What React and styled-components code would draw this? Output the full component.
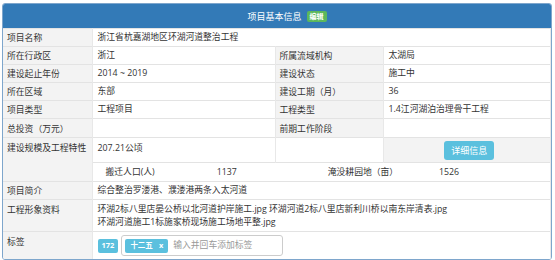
import React from 'react'
import styled, { createGlobalStyle } from 'styled-components'

const Global = createGlobalStyle`
  body {
    margin: 0;
    background: #fff;
    font-family: "Open Sans", "Noto Sans CJK SC", sans-serif;
    font-size: 8.8px;
    color: #333;
  }
`

const Panel = styled.div`
  margin: 3px 3px 0 2px;
  border: 1px solid #7ea6cc;
  border-radius: 3px;
  overflow: hidden;
`

const Heading = styled.div`
  height: 24px;
  background: #337ab7;
  color: #fff;
  display: flex;
  align-items: center;
  justify-content: center;
  gap: 5px;
  font-size: 9px;
  padding-left: 20px;
`

const Badge = styled.span`
  background: ${p => p.$color || '#5cb85c'};
  color: #fff;
  font-size: ${p => p.$size || '7px'};
  font-weight: 700;
  line-height: 1;
  padding: ${p => p.$pad || '2px 3px'};
  border-radius: 2px;
  display: inline-flex;
  align-items: center;
  gap: 6px;
`

const Table = styled.table`
  width: 100%;
  border-collapse: collapse;
  table-layout: fixed;
`

const Row = styled.tr`
  height: ${p => p.$h || 18}px;
  border-top: 1px solid #e3e3e3;
`

const Label = styled.td`
  background: #f3f3f3;
  padding: 0 0 0 4px;
  vertical-align: ${p => p.$top ? 'top' : 'middle'};
  padding-top: ${p => p.$top ? '3px' : '0'};
  border-right: 1px solid #e8e8e8;
  white-space: nowrap;
`

const Value = styled.td`
  padding: ${p => p.$pad || '0 0 0 5px'};
  vertical-align: ${p => p.$top ? 'top' : 'middle'};
  background: ${p => p.$gray ? '#f3f3f3' : '#fff'};
  border-right: 1px solid #e8e8e8;
  line-height: 13px;
  text-align: ${p => p.$center ? 'center' : 'left'};
`

const SubGrid = styled.div`
  display: grid;
  grid-template-columns: repeat(4, 1fr);
  padding-left: 13px;
`

const Button = styled.span`
  display: inline-block;
  background: #5bc0de;
  color: #fff;
  padding: 3px 7px;
  border-radius: 3px;
  font-size: 9px;
  line-height: 13px;
`

const TagInput = styled.div`
  display: inline-flex;
  align-items: center;
  gap: 5px;
  width: 162px;
  height: 21px;
  border: 1px solid #ccc;
  border-radius: 3px;
  padding: 0 3px;
  box-sizing: border-box;
  color: #999;
`

const TagRow = styled.div`
  display: flex;
  align-items: center;
  gap: 3px;
  margin-top: 1px;
`

export default function App() {
  return (
    <>
      <Global />
      <Panel>
        <Heading>
          项目基本信息 <Badge>编辑</Badge>
        </Heading>
        <Table>
          <colgroup>
            <col style={{ width: 89 }} />
            <col style={{ width: 183 }} />
            <col style={{ width: 108 }} />
            <col />
          </colgroup>
          <tbody>
            <Row>
              <Label>项目名称</Label>
              <Value colSpan={3}>浙江省杭嘉湖地区环湖河道整治工程</Value>
            </Row>
            <Row>
              <Label>所在行政区</Label>
              <Value>浙江</Value>
              <Label>所属流域机构</Label>
              <Value>太湖局</Value>
            </Row>
            <Row>
              <Label>建设起止年份</Label>
              <Value>2014 ~ 2019</Value>
              <Label>建设状态</Label>
              <Value>施工中</Value>
            </Row>
            <Row>
              <Label>所在区域</Label>
              <Value>东部</Value>
              <Label>建设工期（月）</Label>
              <Value>36</Value>
            </Row>
            <Row>
              <Label>项目类型</Label>
              <Value>工程项目</Value>
              <Label>工程类型</Label>
              <Value>1.4江河湖泊治理骨干工程</Value>
            </Row>
            <Row $h={19}>
              <Label>总投资（万元）</Label>
              <Value></Value>
              <Label>前期工作阶段</Label>
              <Value></Value>
            </Row>
            <Row $h={25}>
              <Label rowSpan={2} $top>建设规模及工程特性</Label>
              <Value $top $pad="4px 0 0 5px">207.21公顷</Value>
              <Value></Value>
              <Value $gray $center><Button>详细信息</Button></Value>
            </Row>
            <Row $h={19}>
              <Value colSpan={3} $pad="0">
                <SubGrid>
                  <span>搬迁人口(人)</span>
                  <span>1137</span>
                  <span>淹没耕园地（亩）</span>
                  <span>1526</span>
                </SubGrid>
              </Value>
            </Row>
            <Row>
              <Label>项目简介</Label>
              <Value colSpan={3}>综合整治罗溇港、濮溇港两条入太河道</Value>
            </Row>
            <Row $h={32}>
              <Label $top>工程形象资料</Label>
              <Value colSpan={3}>
                环湖2标八里店晏公桥以北河道护岸施工.jpg 环湖河道2标八里店新利川桥以南东岸清表.jpg<br />
                环湖河道施工1标施家桥现场施工场地平整.jpg
              </Value>
            </Row>
            <Row $h={27}>
              <Label $top>标签</Label>
              <Value colSpan={3}>
                <TagRow>
                  <Badge $color="#5bc0de" $size="7.5px" $pad="3px 4px">172</Badge>
                  <TagInput>
                    <Badge $color="#5bc0de" $size="7.5px" $pad="3px 5px">十二五 <span>x</span></Badge>
                    输入并回车添加标签
                  </TagInput>
                </TagRow>
              </Value>
            </Row>
          </tbody>
        </Table>
      </Panel>
    </>
  )
}
